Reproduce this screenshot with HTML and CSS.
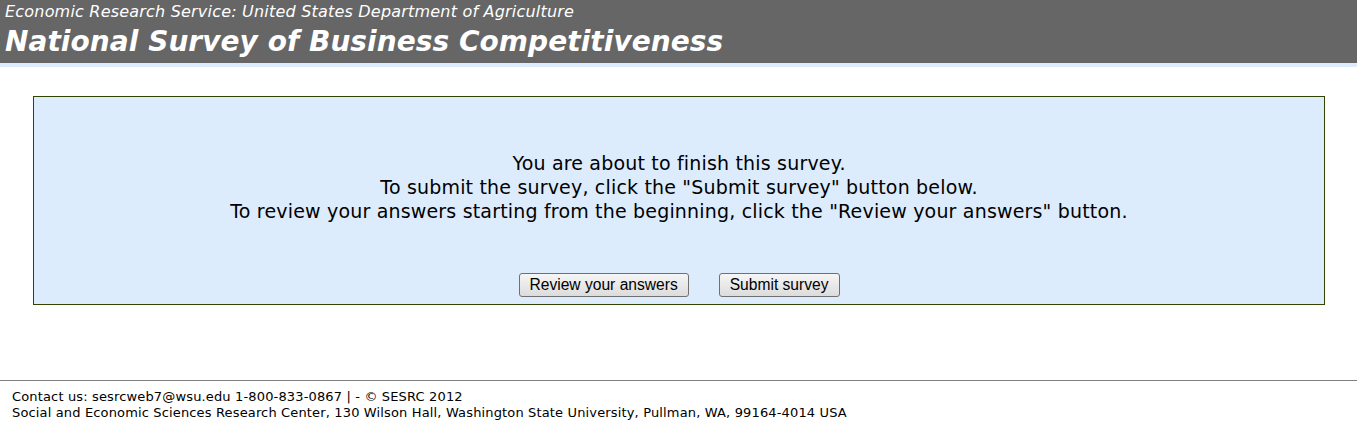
FILE: index.html
```html
<!DOCTYPE html>
<html lang="en">
<head>
  <meta charset="UTF-8" />
  <title>National Survey of Business Competitiveness</title>
  <link rel="stylesheet" href="styles.css">
</head>
<body>

  <div class="header">
    <div class="agency">Economic Research Service: United States Department of Agriculture</div>
    <div class="title">National Survey of Business Competitiveness</div>
  </div>
  <div class="stripe"></div>

  <div class="main">
    <div class="panel">
      <p class="message">
        You are about to finish this survey.<br>
        To submit the survey, click the "Submit survey" button below.<br>
        To review your answers starting from the beginning, click the "Review your answers" button.
      </p>
      <div class="actions">
        <button type="button">Review your answers</button>
        <button type="button">Submit survey</button>
      </div>
    </div>
  </div>

  <div class="footer">
    Contact us: sesrcweb7@wsu.edu 1-800-833-0867 | - &copy; SESRC 2012<br>
    Social and Economic Sciences Research Center, 130 Wilson Hall, Washington State University, Pullman, WA, 99164-4014 USA
  </div>

</body>
</html>
```

FILE: styles.css
```css
body {
  margin: 0;
  font-family: "DejaVu Sans", Verdana, sans-serif;
  background: #fff;
  color: #000;
}
.header {
  background: #666666;
  color: #fff;
  height: 63px;
  padding-left: 5px;
  font-style: italic;
}
.agency {
  font-size: 16px;
  line-height: 24px;
  letter-spacing: 0.2px;
}
.title {
  font-size: 28px;
  font-weight: bold;
  line-height: 36px;
  letter-spacing: 0.05px;
}
.stripe {
  height: 4px;
  background: #ddecfc;
}
.main {
  padding: 29px 32px 0 33px;
  height: 284px;
}
.panel {
  background: #ddecfc;
  border: 1px solid #334400;
  height: 207px;
  text-align: center;
}
.message {
  margin: 54px 0 0;
  font-size: 19px;
  line-height: 24px;
  letter-spacing: 0.18px;
}
.actions {
  margin-top: 50px;
  display: flex;
  justify-content: center;
  gap: 30px;
}
button {
  font-family: "Liberation Sans", Arial, sans-serif;
  font-size: 15.6px;
  height: 24px;
  padding: 0 10px;
  background: linear-gradient(#f6f6f6, #dcdcdc);
  border: 1px solid #707070;
  border-radius: 3px;
  color: #000;
}
.footer {
  border-top: 1px solid #808080;
  padding: 8px 12px;
  font-size: 13px;
  line-height: 16px;
  letter-spacing: 0.15px;
}
```
